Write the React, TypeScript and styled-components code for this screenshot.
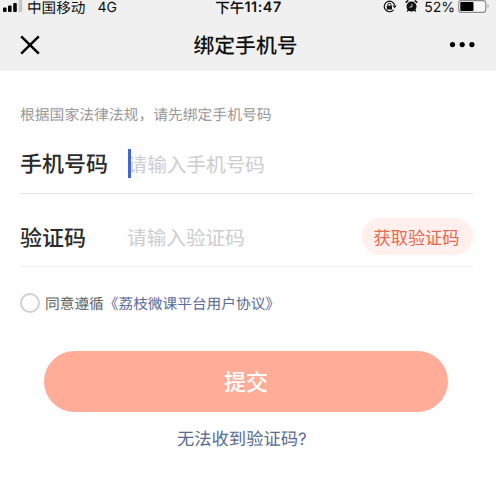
import React from 'react';
import styled, { createGlobalStyle } from 'styled-components';

const GlobalStyle = createGlobalStyle`
  * { box-sizing: border-box; }
  body {
    margin: 0;
    background: #fff;
    font-family: "Noto Sans CJK SC", sans-serif;
    text-rendering: geometricPrecision;
  }
  button, input { font-family: inherit; border: 0; padding: 0; margin: 0; background: none; }
`;

const Screen = styled.main`
  width: 496px;
  height: 483px;
  background: #fefefe;
  white-space: nowrap;
`;

const Header = styled.header`
  height: 71px;
  background: #f0f0f0;
  color: #111;
`;

const StatusBar = styled.div`
  height: 14px;
  display: grid;
  grid-template-columns: 1fr auto 1fr;
  align-items: center;
`;

const StatusGroup = styled.div<{ $end?: boolean }>`
  display: flex;
  align-items: center;
  height: 14px;
  justify-content: ${p => (p.$end ? 'flex-end' : 'flex-start')};
  padding: ${p => (p.$end ? '0 6px 0 0' : '0 0 0 3px')};
`;

const Carrier = styled.span`
  margin-left: 4px;
  padding-top: 1px;
  font-size: 14.6px;
  line-height: 14px;
`;

const Latin = styled.span<{ $left?: number }>`
  margin-left: ${p => p.$left ?? 0}px;
  padding-top: 1px;
  font: 400 14px/14px Inter, sans-serif;
`;

const Clock = styled.div`
  display: flex;
  align-items: center;
  height: 14px;
  padding: 1px 0 0 1px;
  font-size: 14.6px;
  font-weight: 500;
  line-height: 14px;
`;

const Digits = styled.span`
  font: 600 14.3px/14px Inter, sans-serif;
  letter-spacing: 0.6px;
`;

const Icon = styled.svg<{ $left?: number }>`
  display: block;
  flex: none;
  margin-left: ${p => p.$left ?? 0}px;
`;

const NavBar = styled.div`
  height: 57px;
  display: grid;
  grid-template-columns: 1fr auto 1fr;
  align-items: center;
  padding: 4px 20px 0 20px;
`;

const NavButton = styled.button<{ $end?: boolean }>`
  display: block;
  justify-self: ${p => (p.$end ? 'end' : 'start')};
  color: #000;
`;

const Title = styled.h1`
  margin: 0;
  padding: 0 5px 1px 0;
  font-size: 20.8px;
  font-weight: 500;
  line-height: 30px;
`;

const Form = styled.form`
  padding: 32px 23px 0 20px;
`;

const Hint = styled.p`
  margin: 0;
  height: 23px;
  font-size: 14.8px;
  line-height: 24px;
  color: #999;
`;

const Field = styled.div<{ $last?: boolean }>`
  display: flex;
  align-items: center;
  height: ${p => (p.$last ? 73 : 68)}px;
  padding-top: ${p => (p.$last ? 14 : 8)}px;
  border-bottom: 1px solid ${p => (p.$last ? '#f1f1f1' : '#e5e5e5')};
`;

const Label = styled.label`
  width: 107px;
  flex: none;
  padding-bottom: 1px;
  font-size: 22px;
  font-weight: 500;
  line-height: 32px;
  color: #2b2b2b;
`;

const Entry = styled.div`
  display: flex;
  align-items: center;
  flex: 1;
  min-width: 0;
`;

const Caret = styled.span`
  width: 3px;
  height: 29px;
  margin: 0 -3px 0 0.5px;
  background: #4366d5;
  flex: none;
  z-index: 1;
`;

const Input = styled.input`
  width: 100%;
  min-width: 0;
  height: 32px;
  margin-bottom: 1px;
  font-size: 19.65px;
  outline: none;
  &::placeholder { color: #cdcdcd; opacity: 1; font-weight: 400; }
`;

const CodeButton = styled.button`
  width: 111px;
  height: 37px;
  flex: none;
  margin-bottom: 1px;
  padding: 0 2px 0 0;
  border-radius: 19px;
  background: #fff0ed;
  color: #e8694e;
  font-size: 17.2px;
  line-height: 36px;
`;

const Agreement = styled.div`
  display: flex;
  align-items: center;
  height: 73px;
  font-size: 14.7px;
  line-height: 24px;
  color: #666;
`;

const Radio = styled.span`
  width: 20px;
  height: 20px;
  margin: 0 5px 1px 0;
  flex: none;
  border: 2px solid #d1d1d1;
  border-radius: 50%;
`;

const PolicyLink = styled.a`
  color: #5d6c99;
`;

const Submit = styled.button`
  display: block;
  width: 404px;
  height: 61px;
  margin: 11px 0 0 24px;
  padding: 0 0 2px 0;
  border-radius: 31px;
  background: #ffac98;
  color: #fff;
  font-size: 22px;
  font-weight: 500;
  line-height: 59px;
`;

const HelpLink = styled.a`
  display: block;
  margin: 12px 0 0 157px;
  font-size: 17.3px;
  line-height: 28px;
  color: #5a6b92;
`;

const Question = styled.span`
  font-family: Inter, sans-serif;
  font-size: 17px;
`;

function SignalIcon() {
  return (
    <Icon width="20" height="14" viewBox="0 0 20 14">
      <g fill="#050505">
        <rect x="0" y="7.5" width="3.6" height="4.5" rx="1" />
        <rect x="5" y="5.5" width="3.6" height="6.5" rx="1" />
        <rect x="10.2" y="3" width="3.6" height="9" rx="1" />
      </g>
      <rect x="15.7" y="0" width="3.6" height="12" rx="1" fill="#c5c5c5" />
    </Icon>
  );
}

function RotationLockIcon() {
  return (
    <Icon width="14" height="14" viewBox="0 0 14 14" fill="none" stroke="#111">
      <path d="M10.6 9.9A5.3 5.3 0 1 1 11.7 5.2" strokeWidth="1.2" />
      <path d="M9.5 5.5H13.7L11.6 8.3Z" fill="#111" stroke="none" />
      <rect x="3.8" y="5.7" width="5.2" height="3.9" rx=".5" fill="#111" stroke="none" />
      <path d="M4.9 6V4.7a1.5 1.5 0 0 1 3 0V6" />
    </Icon>
  );
}

function AlarmIcon() {
  return (
    <Icon $left={8} width="13" height="14" viewBox="0 0 13 14" fill="none" stroke="#111" strokeLinecap="round">
      <circle cx="6.5" cy="6.6" r="5" fill="#111" stroke="none" />
      <path d="M1.2 2.2 2.8.9M11.8 2.2 10.2.9" strokeWidth="1.5" />
      <path d="M3 10.2 2.4 11.2M10 10.2l.6 1" strokeWidth="1.2" />
      <path d="M6.9 4.2V7H4.7" stroke="#f0f0f0" strokeWidth=".8" />
    </Icon>
  );
}

function BatteryIcon() {
  return (
    <Icon $left={3} width="32" height="14" viewBox="0 0 32 14">
      <rect x=".7" y="0.6" width="27" height="11.8" rx="2.7" fill="#f8f8f8" stroke="#8c8c8c" strokeWidth="1.1" />
      <rect x="2.3" y="2" width="13.2" height="9" rx="1" fill="#000" />
      <path d="M29.5 4.1c1.6.5 1.6 3.5 0 4Z" fill="#999" />
    </Icon>
  );
}

export default function App() {
  return (
    <>
      <GlobalStyle />
      <Screen>
        <Header>
          <StatusBar>
            <StatusGroup>
              <SignalIcon />
              <Carrier>中国移动</Carrier>
              <Latin $left={12}>4G</Latin>
            </StatusGroup>
            <Clock>下午<Digits>11:47</Digits></Clock>
            <StatusGroup $end>
              <RotationLockIcon />
              <AlarmIcon />
              <Latin $left={6}>52%</Latin>
              <BatteryIcon />
            </StatusGroup>
          </StatusBar>
          <NavBar>
            <NavButton type="button" aria-label="关闭">
              <Icon width="20" height="20" viewBox="0 0 20 20" fill="none" stroke="currentColor" strokeWidth="2.5">
                <path d="M1.2 1.3 18.8 18.7M18.8 1.3 1.2 18.7" />
              </Icon>
            </NavButton>
            <Title>绑定手机号</Title>
            <NavButton type="button" aria-label="更多" $end>
              <Icon width="27" height="6" viewBox="0 0 27 6" fill="currentColor">
                <circle cx="3.5" cy="2.6" r="2.6" />
                <circle cx="13.2" cy="2.6" r="2.6" />
                <circle cx="22.9" cy="2.6" r="2.6" />
              </Icon>
            </NavButton>
          </NavBar>
        </Header>
        <Form>
          <Hint>根据国家法律法规，请先绑定手机号码</Hint>
          <Field>
            <Label htmlFor="phone">手机号码</Label>
            <Entry>
              <Caret />
              <Input id="phone" placeholder="请输入手机号码" />
            </Entry>
          </Field>
          <Field $last>
            <Label htmlFor="code">验证码</Label>
            <Entry>
              <Input id="code" placeholder="请输入验证码" />
            </Entry>
            <CodeButton type="button">获取验证码</CodeButton>
          </Field>
          <Agreement>
            <Radio />
            <span>
              同意遵循<PolicyLink>《荔枝微课平台用户协议》</PolicyLink>
            </span>
          </Agreement>
          <Submit type="button">提交</Submit>
          <HelpLink>无法收到验证码<Question>?</Question></HelpLink>
        </Form>
      </Screen>
    </>
  );
}
